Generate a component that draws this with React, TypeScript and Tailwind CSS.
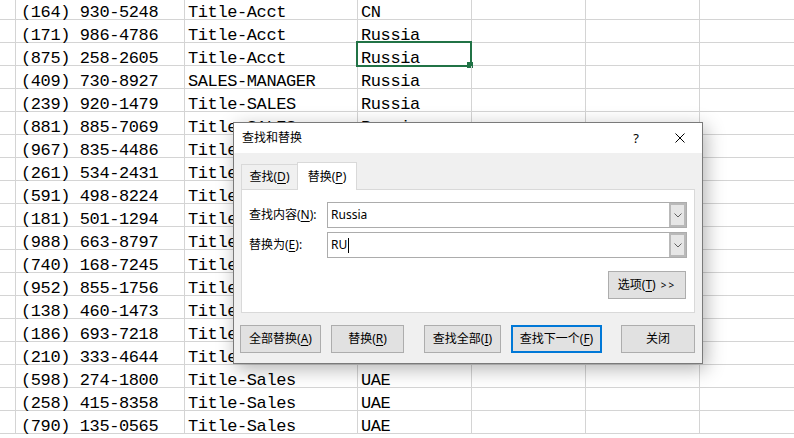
const rows: [string, string, string][] = [
  ["(164) 930-5248", "Title-Acct", "CN"],
  ["(171) 986-4786", "Title-Acct", "Russia"],
  ["(875) 258-2605", "Title-Acct", "Russia"],
  ["(409) 730-8927", "SALES-MANAGER", "Russia"],
  ["(239) 920-1479", "Title-SALES", "Russia"],
  ["(881) 885-7069", "Title-SALES", "Russia"],
  ["(967) 835-4486", "Title-SALES", "Russia"],
  ["(261) 534-2431", "Title-SALES", "Russia"],
  ["(591) 498-8224", "Title-Sales", "UAE"],
  ["(181) 501-1294", "Title-Sales", "UAE"],
  ["(988) 663-8797", "Title-Sales", "UAE"],
  ["(740) 168-7245", "Title-Sales", "UAE"],
  ["(952) 855-1756", "Title-Sales", "UAE"],
  ["(138) 460-1473", "Title-Sales", "UAE"],
  ["(186) 693-7218", "Title-Sales", "UAE"],
  ["(210) 333-4644", "Title-Sales", "UAE"],
  ["(598) 274-1800", "Title-Sales", "UAE"],
  ["(258) 415-8358", "Title-Sales", "UAE"],
  ["(790) 135-0565", "Title-Sales", "UAE"],
];

function Key({ k }: { k: string }) {
  return <span className="underline decoration-1 underline-offset-[2px]">{k}</span>;
}

function Combo({ value, caret }: { value: string; caret?: boolean }) {
  return (
    <div className="flex h-[26px] flex-1 border border-[#acacac] bg-white">
      <div className="flex flex-1 items-center pl-[3px] text-[12px] leading-[14px]">
        {value}
        {caret && <span className="ml-[1px] h-[15px] w-[1px] bg-black" />}
      </div>
      <div className="flex w-[17px] items-center justify-center border-2 border-[#b9b9b9] bg-[#e6e6e6]">
        <svg width="8" height="5" viewBox="0 0 8 5">
          <polyline points="0.5,0.5 4,4 7.5,0.5" fill="none" stroke="#606060" strokeWidth="1" />
        </svg>
      </div>
    </div>
  );
}

function Btn({ children, w, primary, className = "" }: { children: React.ReactNode; w: string; primary?: boolean; className?: string }) {
  return (
    <div
      className={`flex h-[28px] items-center justify-center bg-[#e1e1e1] text-[12px] leading-[14px] ${
        primary ? "border-2 border-[#0078d7]" : "border border-[#adadad]"
      } ${w} ${className}`}
    >
      {children}
    </div>
  );
}

export default function App() {
  return (
    <div className="relative h-[438px] w-[794px] overflow-hidden bg-white">
      {/* sheet */}
      <div className="-mt-[3px] font-['Liberation_Mono',monospace] text-[17px] tracking-[-0.4px] text-black">
        {rows.map((r, i) => (
          <div key={i} className="flex h-[23px] border-b border-[#d4d4d4] whitespace-nowrap">
            <div className="w-[16px] shrink-0 border-r border-[#d4d4d4]" />
            <div className="flex w-[169px] shrink-0 items-end border-r border-[#d4d4d4] pl-[5px] leading-[13px]">
              {r[0]}
            </div>
            <div className="flex w-[173px] shrink-0 items-end border-r border-[#d4d4d4] pl-[3px] leading-[13px]">
              {r[1]}
            </div>
            <div className="relative flex w-[114px] shrink-0 items-end border-r border-[#d4d4d4] pl-[3px] leading-[13px]">
              {r[2]}
              {i === 2 && (
                <div className="absolute -top-[2px] -bottom-[2px] -left-[2px] -right-[1px] border-2 border-[#217346]">
                  <div className="absolute -right-[3px] -bottom-[3px] h-[6px] w-[6px] bg-[#217346]" />
                </div>
              )}
            </div>
            <div className="w-[114px] shrink-0 border-r border-[#d4d4d4]" />
            <div className="w-[114px] shrink-0 border-r border-[#d4d4d4]" />
            <div className="flex-1" />
          </div>
        ))}
      </div>

      {/* find & replace dialog */}
      <div className="absolute left-[233px] top-[122px] flex h-[242px] w-[470px] flex-col border border-[#7a7a7a] bg-[#f0f0f0] font-['Noto_Sans','Noto_Sans_CJK_SC',sans-serif] text-black shadow-[3px_5px_18px_rgba(0,0,0,0.3)]">
        <div className="flex h-[30px] items-center bg-white pl-[8px] text-[12px] leading-[14px]">
          <span>查找和替换</span>
          <div className="ml-auto flex h-full">
            <div className="flex w-[44px] items-center justify-center text-[13px]">?</div>
            <div className="flex w-[44px] items-center justify-center">
              <svg width="10" height="10" viewBox="0 0 10 10">
                <path d="M0.5 0.5L9.5 9.5M9.5 0.5L0.5 9.5" stroke="#000" strokeWidth="1" />
              </svg>
            </div>
          </div>
        </div>

        <div className="flex items-end pl-[7px] pt-[9px] text-[12px] leading-[14px]">
          <div className="flex h-[25px] w-[56px] items-center justify-center border border-r-0 border-b-0 border-[#d9d9d9]">
            查找(<Key k="D" />)
          </div>
          <div className="relative z-10 -mb-[1px] flex h-[28px] w-[60px] items-center justify-center border border-b-0 border-[#d9d9d9] bg-white">
            替换(<Key k="P" />)
          </div>
        </div>

        <div className="mx-[7px] flex h-[124px] flex-col border border-[#d9d9d9] bg-white px-[7px] pt-[12px] text-[12px] leading-[14px]">
          <div className="flex items-center">
            <div className="w-[78px]">
              查找内容(<Key k="N" />):
            </div>
            <Combo value="Russia" />
          </div>
          <div className="mt-[4px] flex items-center">
            <div className="w-[78px]">
              替换为(<Key k="E" />):
            </div>
            <Combo value="RU" caret />
          </div>
          <Btn w="w-[78px]" className="mr-[1px] mt-[13px] self-end">
            选项(<Key k="T" />)<span className="ml-[5px] text-[10px] tracking-[2px]">&gt;&gt;</span>
          </Btn>
        </div>

        <div className="mt-[12px] flex px-[6px]">
          <Btn w="w-[81px]">
            全部替换(<Key k="A" />)
          </Btn>
          <Btn w="w-[73px]" className="ml-[10px]">
            替换(<Key k="R" />)
          </Btn>
          <Btn w="w-[77px]" className="ml-[20px]">
            查找全部(<Key k="I" />)
          </Btn>
          <Btn w="w-[91px]" primary className="ml-[10px]">
            查找下一个(<Key k="F" />)
          </Btn>
          <Btn w="w-[74px]" className="ml-[19px]">
            关闭
          </Btn>
        </div>
      </div>
    </div>
  );
}
